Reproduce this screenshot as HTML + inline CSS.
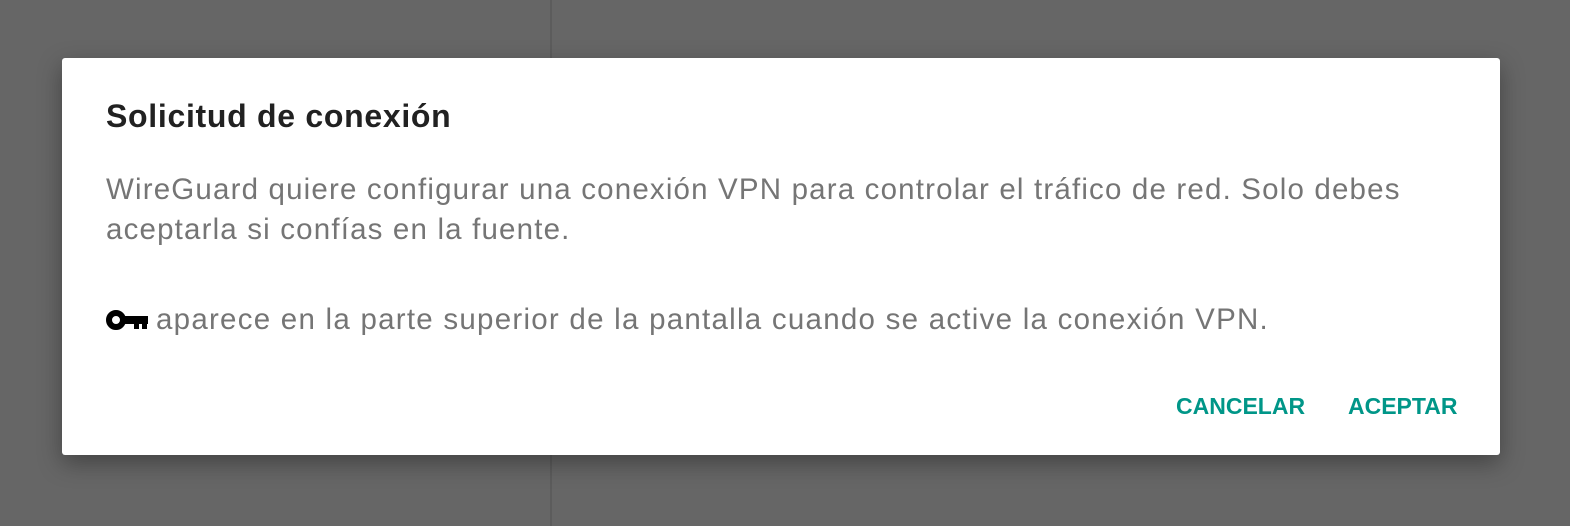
<!DOCTYPE html>
<html><head><meta charset="utf-8"><style>
html,body{margin:0;padding:0}
body{width:1570px;height:526px;background:#666;position:relative;overflow:hidden;font-family:"Liberation Sans",sans-serif}
.line{position:absolute;left:550px;top:0;width:2px;height:526px;background:#5c5c5c}
.dlg{position:absolute;left:62px;top:58px;width:1438px;height:397px;background:#fff;border-radius:3px;box-shadow:0 8px 24px rgba(0,0,0,.35)}
.t{position:absolute;left:44px;top:40px;font-size:32px;letter-spacing:0.7px;font-weight:bold;color:#212121;white-space:nowrap}
.b{position:absolute;left:44px;font-size:29.5px;letter-spacing:1.17px;color:#757575;white-space:nowrap}
.btn{position:absolute;top:335px;font-size:23px;font-weight:bold;color:#009688;white-space:nowrap}
</style></head><body>
<div class="line"></div>
<div class="dlg">
<div class="t">Solicitud de conexión</div>
<div class="b" style="top:115px">WireGuard quiere configurar una conexión VPN para controlar el tráfico de red. Solo debes</div>
<div class="b" style="top:155px">aceptarla si confías en la fuente.</div>
<div class="b" style="top:245px;letter-spacing:1.25px"><svg width="42" height="20" viewBox="0 0 42 20" style="vertical-align:-1px;margin-right:8px"><circle cx="10" cy="10" r="7" fill="none" stroke="#000" stroke-width="6"/><rect x="16" y="6" width="26" height="8" fill="#000"/><rect x="28" y="12" width="5" height="7" fill="#000"/><rect x="36" y="12" width="5" height="7" fill="#000"/></svg>aparece en la parte superior de la pantalla cuando se active la conexión VPN.</div>
<div class="btn" style="left:1114px">CANCELAR</div>
<div class="btn" style="left:1286px">ACEPTAR</div>
</div>
</body></html>
